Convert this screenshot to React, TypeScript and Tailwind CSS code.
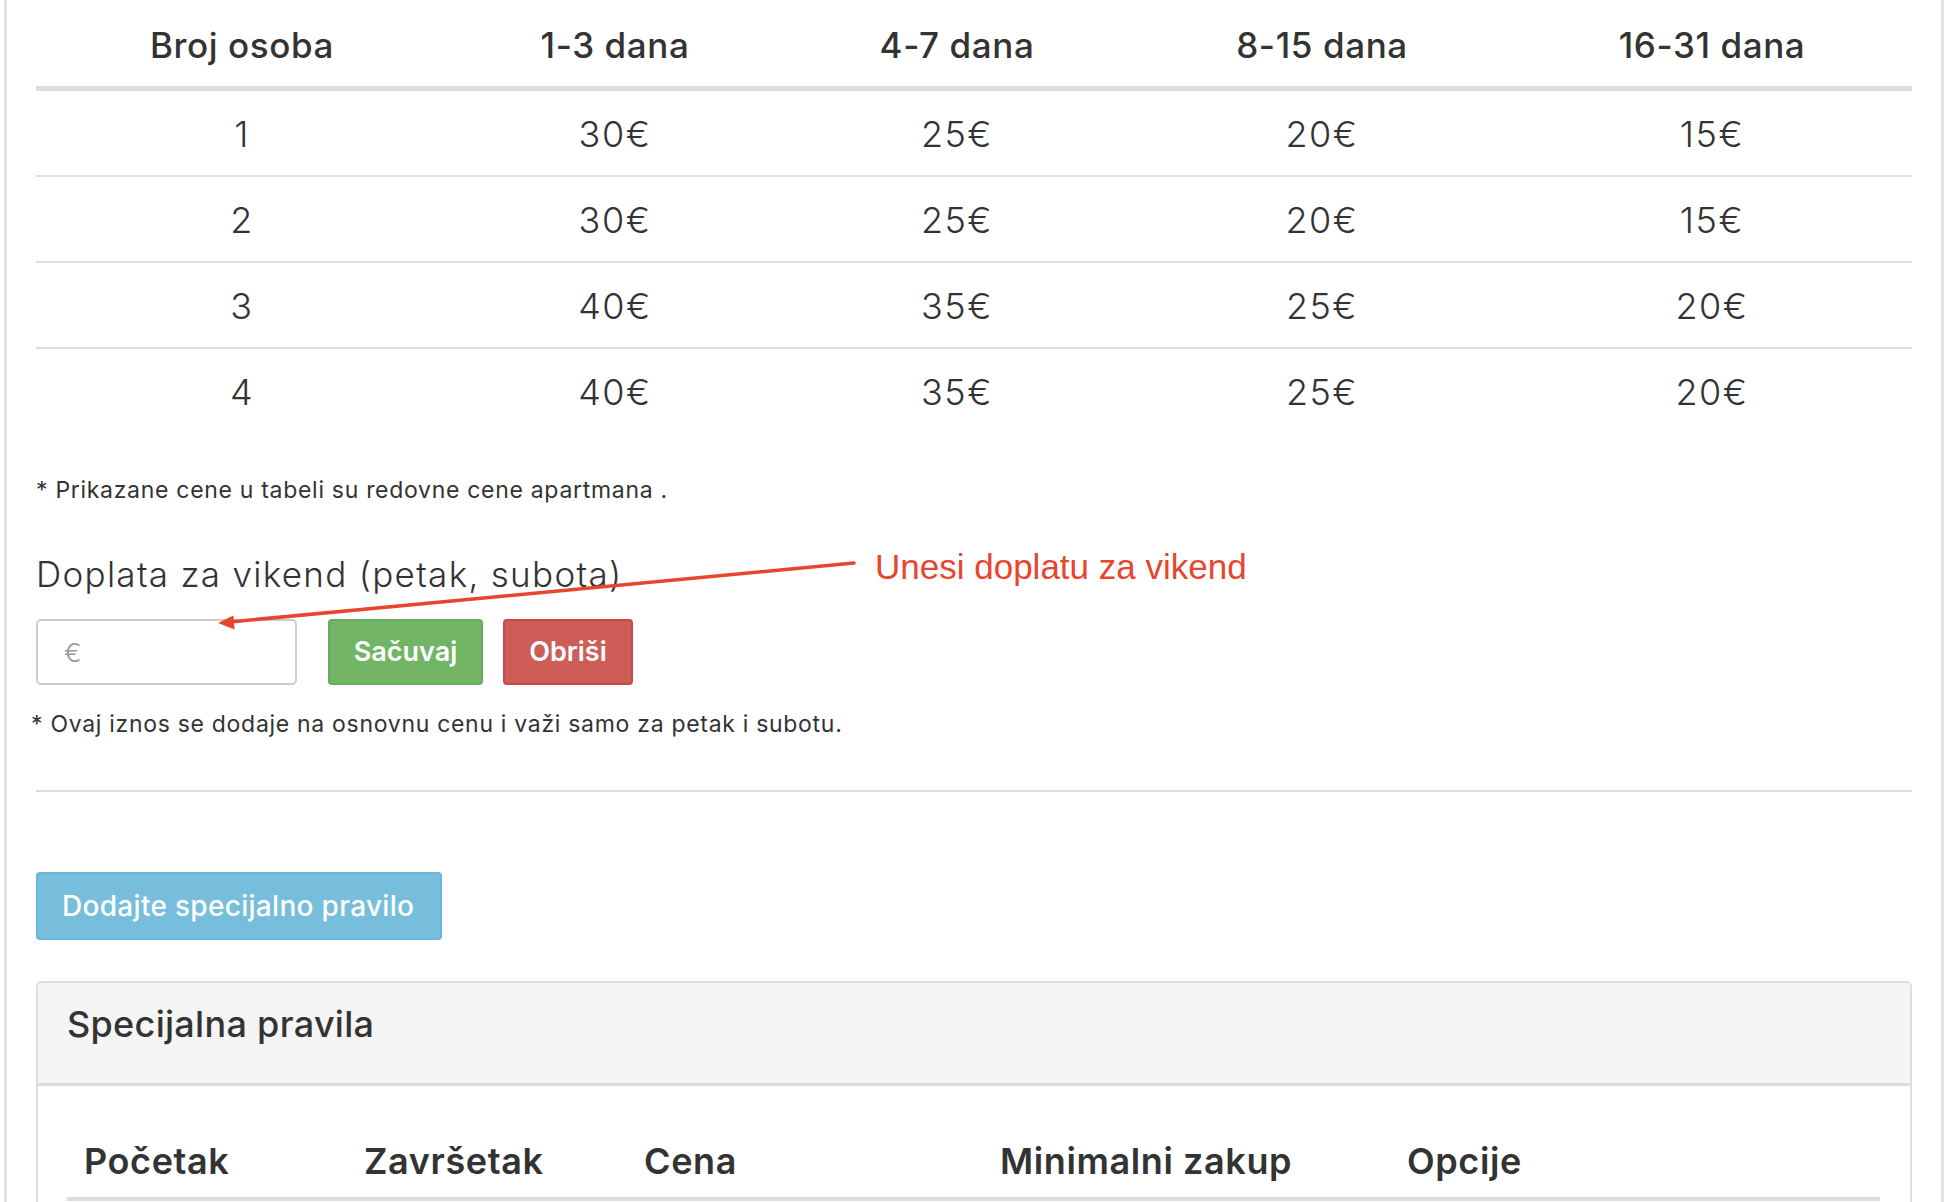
import React from 'react';

const HEADERS = ['Broj osoba', '1-3 dana', '4-7 dana', '8-15 dana', '16-31 dana'];

const ROWS = [
  ['1', '30€', '25€', '20€', '15€'],
  ['2', '30€', '25€', '20€', '15€'],
  ['3', '40€', '35€', '25€', '20€'],
  ['4', '40€', '35€', '25€', '20€'],
];

const RULE_COLS = ['Početak', 'Završetak', 'Cena', 'Minimalni zakup', 'Opcije'];

const PriceTable: React.FC = () => (
  <div>
    <div className="grid h-[91px] grid-cols-[412px_334px_350px_380px_400px] items-center border-b-[5px] border-[#dddddd] pt-[4px]">
      {HEADERS.map((h) => (
        <div key={h} className="text-center text-[35px] font-medium tracking-[0.6px] text-[#333]">
          {h}
        </div>
      ))}
    </div>
    {ROWS.map((row, i) => (
      <div
        key={i}
        className={
          i < ROWS.length - 1
            ? 'grid h-[86px] grid-cols-[412px_334px_350px_380px_400px] items-center border-b-2 border-[#dddddd] pt-[2px]'
            : 'grid h-[86px] grid-cols-[412px_334px_350px_380px_400px] items-center'
        }
      >
        {row.map((cell, j) => (
          <div key={j} className="text-center text-[36px] font-light tracking-[1.5px] text-[#333]">
            {cell}
          </div>
        ))}
      </div>
    ))}
  </div>
);

const Annotation: React.FC = () => (
  <>
    <svg
      className="pointer-events-none absolute left-0 top-0"
      width="1950"
      height="1202"
      viewBox="0 0 1950 1202"
    >
      <line x1="854" y1="563" x2="232" y2="621.7" stroke="#e8452f" strokeWidth="3.5" strokeLinecap="round" />
      <polygon points="218,623 233.5,615.5 234.6,629.5" fill="#e8452f" />
    </svg>
    <span className="pointer-events-none absolute left-[875px] top-[549px] whitespace-nowrap font-['Liberation_Sans',Arial,sans-serif] text-[35px] leading-[36px] text-[#e8452f]">
      Unesi doplatu za vikend
    </span>
  </>
);

const App: React.FC = () => {
  return (
    <div className="relative h-[1202px] w-[1950px] overflow-hidden bg-white font-['Inter',sans-serif] text-[#333]">
      <div className="ml-[4px] min-h-[1202px] w-[1940px] border-x-[3px] border-[#e3e3e3] pl-[29px] pr-[29px]">
        <PriceTable />

        <p className="mt-[40px] text-[23px] leading-[30px] tracking-[0.7px] text-[#333]">
          * Prikazane cene u tabeli su redovne cene apartmana .
        </p>

        <h3 className="mt-[49px] text-[35px] font-light leading-[40px] tracking-[1.3px] text-[#333]">
          Doplata za vikend (petak, subota)
        </h3>

        <div className="mt-[25px] flex items-center">
          <div className="flex h-[66px] w-[261px] items-center rounded-[5px] border-2 border-[#cccccc] bg-white pl-[26px]">
            <span className="text-[26px] font-light text-[#999]">€</span>
          </div>
          <button className="ml-[31px] h-[66px] w-[155px] rounded-[4px] border-2 border-[#67ab5c] bg-[#72b567] text-[27px] font-semibold text-white">
            Sačuvaj
          </button>
          <button className="ml-[20px] h-[66px] w-[130px] rounded-[4px] border-2 border-[#c24c45] bg-[#cd5d56] text-[27px] font-semibold text-white">
            Obriši
          </button>
        </div>

        <p className="-ml-[5px] mt-[24px] text-[23px] leading-[30px] tracking-[0.7px] text-[#333]">
          * Ovaj iznos se dodaje na osnovnu cenu i važi samo za petak i subotu.
        </p>

        <div className="mt-[51px] border-t-2 border-[#dddddd]" />

        <button className="mt-[80px] flex h-[68px] w-[406px] items-center rounded-[4px] border-2 border-[#68b6d8] bg-[#76bedc] pl-[24px] text-[28px] font-medium tracking-[0.3px] text-white">
          Dodajte specijalno pravilo
        </button>

        <div className="mt-[41px] rounded-t-[6px] border-2 border-[#dddddd]">
          <div className="h-[103px] rounded-t-[5px] border-b-[3px] border-[#dcdcdc] bg-[#f5f5f5] pl-[29px] pt-[21px]">
            <h2 className="text-[36px] font-medium leading-[40px] tracking-[0.3px] text-[#333]">
              Specijalna pravila
            </h2>
          </div>
          <div className="h-[200px] bg-white pl-[29px] pr-[30px] pt-[55px]">
            <div className="grid grid-cols-[280px_280px_356px_407px_1fr] border-b-4 border-[#dddddd] pb-[16px]">
              {RULE_COLS.map((c) => (
                <div
                  key={c}
                  className="pl-[17px] text-left text-[36px] font-semibold leading-[40px] tracking-[0.6px] text-[#333]"
                >
                  {c}
                </div>
              ))}
            </div>
          </div>
        </div>
      </div>

      <Annotation />
    </div>
  );
};

export default App;
